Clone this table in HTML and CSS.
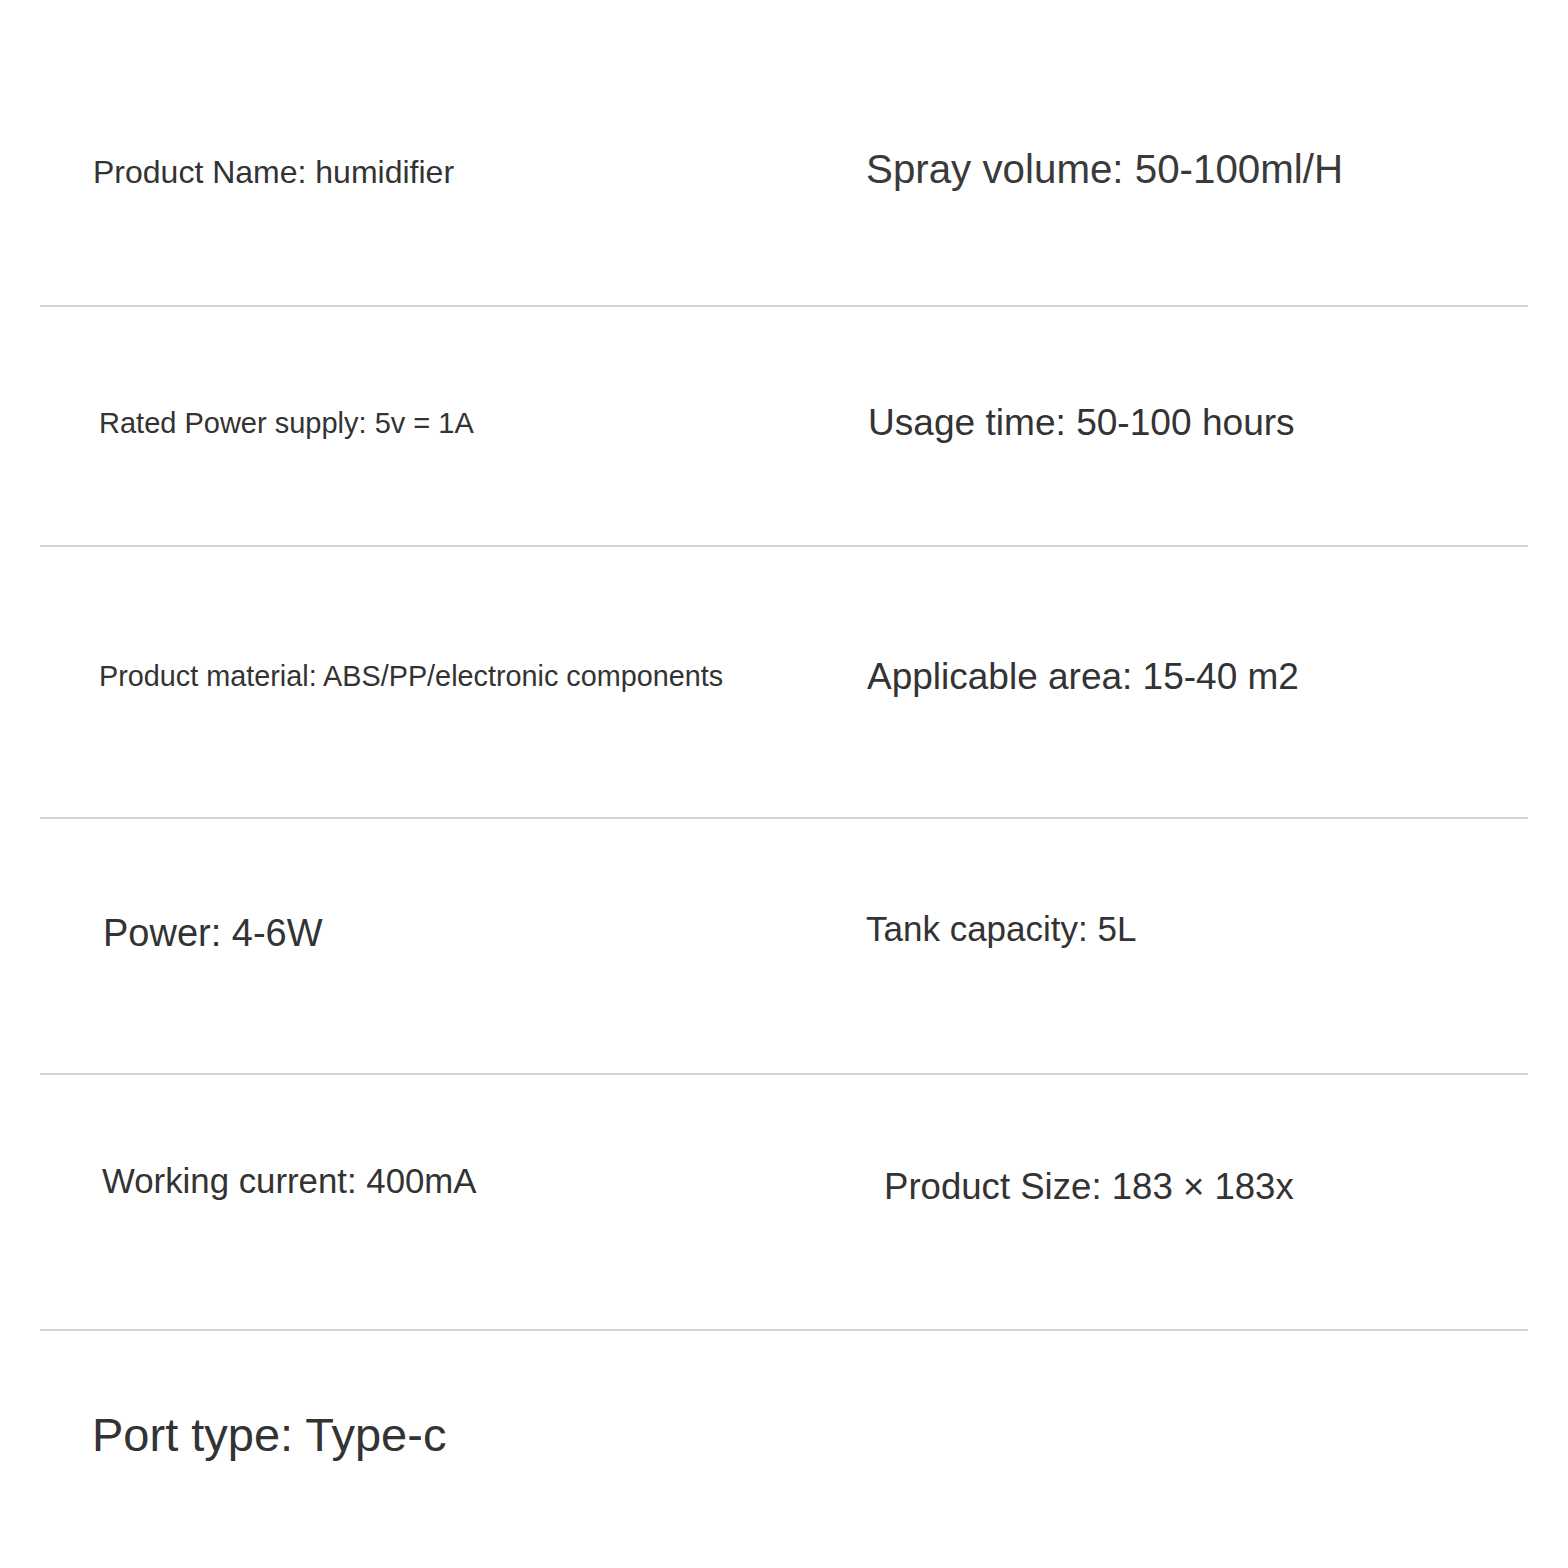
FILE: index.html
```html
<!DOCTYPE html>
<html lang="en">
<head>
<meta charset="utf-8">
<title>Humidifier specifications</title>
<link rel="stylesheet" href="styles.css">
</head>
<body>
<div class="specs">
  <div class="row r1">
    <div class="cell l1">Product Name: humidifier</div>
    <div class="cell rt1">Spray volume: 50-100ml/H</div>
  </div>
  <div class="row r2">
    <div class="cell l2">Rated Power supply: 5v = 1A</div>
    <div class="cell rt2">Usage time: 50-100 hours</div>
  </div>
  <div class="row r3">
    <div class="cell l3">Product material: ABS/PP/electronic components</div>
    <div class="cell rt3">Applicable area: 15-40 m2</div>
  </div>
  <div class="row r4">
    <div class="cell l4">Power: 4-6W</div>
    <div class="cell rt4">Tank capacity: 5L</div>
  </div>
  <div class="row r5">
    <div class="cell l5">Working current: 400mA</div>
    <div class="cell rt5">Product Size: 183 × 183x</div>
  </div>
  <div class="row r6 last">
    <div class="cell l6">Port type: Type-c</div>
  </div>
</div>
</body>
</html>
```

FILE: styles.css
```css
html, body {
  margin: 0;
  padding: 0;
  background: #ffffff;
}

body {
  font-family: "Liberation Sans", Arial, sans-serif;
  color: #333333;
  width: 1568px;
  height: 1568px;
  overflow: hidden;
}

.specs {
  margin: 0 40px;
  display: flex;
  flex-direction: column;
}

.row {
  display: grid;
  grid-template-columns: 820px 1fr;
  align-items: start;
  border-bottom: 2px solid #d2d2d2;
  box-sizing: content-box;
}

.row.last {
  border-bottom: none;
}

.r1 { height: 305px; }
.r2 { height: 238px; }
.r3 { height: 270px; }
.r4 { height: 254px; }
.r5 { height: 254px; }
.r6 { height: 237px; }

.cell {
  line-height: 1;
  white-space: nowrap;
}

/* row 1 */
.l1 { font-size: 32px; padding: 156px 0 0 53px; }
.rt1 { font-size: 40.3px; padding: 150px 0 0 6px; color: #3a3a3a; }

/* row 2 */
.l2 { font-size: 29px; padding: 102px 0 0 59px; }
.rt2 { font-size: 37.1px; padding: 97px 0 0 8px; }

/* row 3 */
.l3 { font-size: 28.8px; padding: 115px 0 0 59px; }
.rt3 { font-size: 37px; padding: 111px 0 0 7px; }

/* row 4 */
.l4 { font-size: 38px; padding: 95px 0 0 63px; }
.rt4 { font-size: 35px; padding: 92px 0 0 6px; }

/* row 5 */
.l5 { font-size: 34.8px; padding: 89px 0 0 62px; }
.rt5 { font-size: 36.6px; padding: 94px 0 0 24px; }

/* row 6 */
.l6 { font-size: 47px; padding: 80px 0 0 52px; }
```
